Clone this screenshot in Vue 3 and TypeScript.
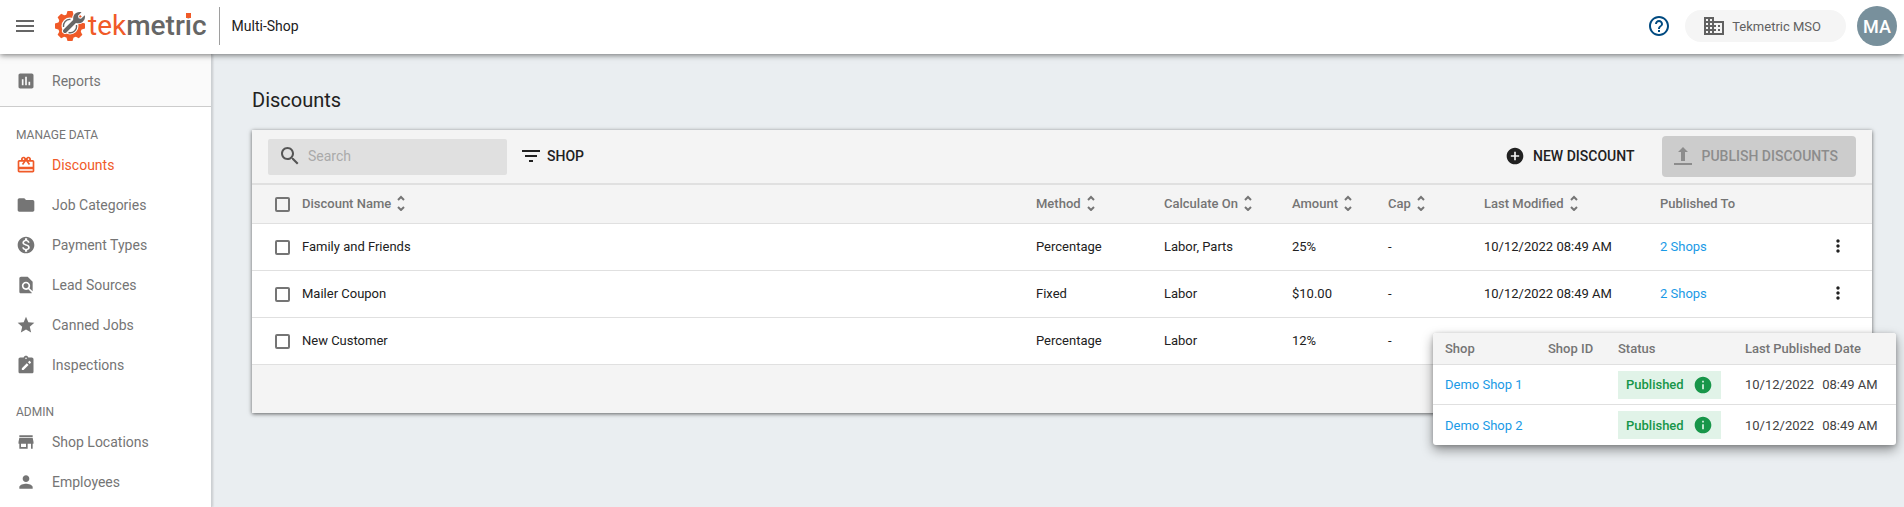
<script setup lang="ts">
import { ref } from 'vue'

interface NavItem { label: string; icon: string; active?: boolean }
interface Discount { name: string; method: string; on: string; amount: string; modified: string }

const icons: Record<string, string> = {
  reports: 'M19 3H5c-1.1 0-2 .9-2 2v14c0 1.100.9 2 2 2h14c1.100 0 2-.9 2-2V5c0-1.100-.9-2-2-2zM9 17H7v-7h2v7zm4 0h-2V7h2v10zm4 0h-2v-4h2v4z',
  gift: 'M20 6h-2.180c.11-.31.18-.65.18-1 0-1.660-1.340-3-3-3-1.050 0-1.960.54-2.500 1.350l-.5.67-.5-.68C10.960 2.540 10.050 2 9 2 7.340 2 6 3.340 6 5c0 .35.07.69.18 1H4c-1.110 0-1.990.89-1.990 2L2 19c0 1.110.89 2 2 2h16c1.110 0 2-.89 2-2V8c0-1.110-.89-2-2-2zm-5-2c.55 0 1 .45 1 1s-.45 1-1 1-1-.45-1-1 .45-1 1-1zM9 4c.55 0 1 .45 1 1s-.45 1-1 1-1-.45-1-1 .45-1 1-1zm11 15H4v-2h16v2zm0-5H4V8h5.080L7 10.830 8.620 12 11 8.760l1-1.360 1 1.360L15.380 12 17 10.830 14.920 8H20v6z',
  folder: 'M10 4H4c-1.100 0-1.990.9-1.990 2L2 18c0 1.100.9 2 2 2h16c1.100 0 2-.9 2-2V8c0-1.100-.9-2-2-2h-8l-2-2z',
  money: 'M12 2C6.480 2 2 6.480 2 12s4.480 10 10 10 10-4.480 10-10S17.520 2 12 2zm1.410 16.090V20h-2.670v-1.930c-1.710-.36-3.160-1.460-3.270-3.400h1.960c.1 1.050.82 1.870 2.650 1.870 1.960 0 2.400-.98 2.400-1.590 0-.83-.44-1.610-2.670-2.140-2.480-.6-4.180-1.620-4.180-3.670 0-1.720 1.390-2.840 3.110-3.210V4h2.670v1.950c1.860.45 2.790 1.860 2.850 3.390H14.300c-.05-1.110-.64-1.870-2.220-1.870-1.500 0-2.400.68-2.400 1.640 0 .84.65 1.390 2.670 1.910s4.180 1.390 4.180 3.910c-.01 1.830-1.380 2.830-3.120 3.160z',
  lead: 'M20 19.590V8l-6-6H6c-1.100 0-1.990.9-1.990 2L4 20c0 1.100.89 2 1.990 2H18c.45 0 .85-.15 1.190-.4l-4.430-4.430c-.8.52-1.740.83-2.760.83-2.760 0-5-2.240-5-5s2.240-5 5-5 5 2.240 5 5c0 1.020-.31 1.960-.83 2.750L20 19.590zM9 13c0 1.660 1.340 3 3 3s3-1.340 3-3-1.340-3-3-3-3 1.340-3 3z',
  star: 'M12 17.270L18.180 21l-1.640-7.030L22 9.240l-7.190-.61L12 2 9.190 8.630 2 9.240l5.460 4.730L5.820 21z',
  inspect: 'M19 3h-4.180C14.400 1.840 13.300 1 12 1s-2.400.84-2.820 2H5c-1.100 0-2 .9-2 2v15c0 1.100.9 2 2 2h14c1.100 0 2-.9 2-2V5c0-1.100-.9-2-2-2zm-7 0c.55 0 1 .45 1 1s-.45 1-1 1-1-.45-1-1 .45-1 1-1zM9.100 18H7v-2.100l5.980-5.980 2.100 2.100L9.100 18zm8.750-8.750l-1.400 1.400-2.100-2.100 1.400-1.400c.2-.2.510-.2.710 0l1.390 1.390c.2.2.2.510 0 .71z',
  store: 'M20 4H4v2h16V4zm1 10v-2l-1-5H4l-1 5v2h1v6h10v-6h4v6h2v-6h1zm-9 4H6v-4h6v4z',
  person: 'M12 12c2.210 0 4-1.790 4-4s-1.790-4-4-4-4 1.790-4 4 1.790 4 4 4zm0 2c-2.670 0-8 1.340-8 4v2h16v-2c0-2.660-5.330-4-8-4z',
}
const groups: { title: string; items: NavItem[] }[] = [
  { title: 'MANAGE DATA', items: [
    { label: 'Discounts', icon: 'gift', active: true },
    { label: 'Job Categories', icon: 'folder' },
    { label: 'Payment Types', icon: 'money' },
    { label: 'Lead Sources', icon: 'lead' },
    { label: 'Canned Jobs', icon: 'star' },
    { label: 'Inspections', icon: 'inspect' },
  ] },
  { title: 'ADMIN', items: [
    { label: 'Shop Locations', icon: 'store' },
    { label: 'Employees', icon: 'person' },
  ] },
]
const columns = [
  { key: 'name', label: 'Discount Name', sort: true },
  { key: 'method', label: 'Method', sort: true },
  { key: 'on', label: 'Calculate On', sort: true },
  { key: 'amount', label: 'Amount', sort: true },
  { key: 'cap', label: 'Cap', sort: true },
  { key: 'modified', label: 'Last Modified', sort: true },
  { key: 'published', label: 'Published To', sort: false },
]
const discounts: Discount[] = [
  { name: 'Family and Friends', method: 'Percentage', on: 'Labor, Parts', amount: '25%', modified: '10/12/2022 08:49 AM' },
  { name: 'Mailer Coupon', method: 'Fixed', on: 'Labor', amount: '$10.00', modified: '10/12/2022 08:49 AM' },
  { name: 'New Customer', method: 'Percentage', on: 'Labor', amount: '12%', modified: '10/12/2022 08:49 AM' },
]
const shops = ['Demo Shop 1', 'Demo Shop 2']
const search = ref('')
const teeth = [0, 45, 90, 135, 180, 225, 270, 315]
</script>

<template>
  <div class="app">
    <header class="topbar">
      <button class="plain menu" aria-label="Menu">
        <svg width="24" height="24" viewBox="0 0 24 24"><path d="M3 18h18v-2H3v2zm0-5h18v-2H3v2zm0-7v2h18V6H3z" /></svg>
      </button>
      <a class="brand" href="#" aria-label="tekmetric">
        <svg width="32" height="32" viewBox="0 0 32 32">
          <g class="gear">
            <circle cx="15" cy="16" r="12" />
            <path v-for="a in teeth" :key="a" d="M11 6 L12.500 1 h5 L19 6z" :transform="`rotate(${a} 15 16)`" />
          </g>
          <circle cx="15" cy="16" r="8.500" fill="#fff" />
          <path d="M8.500 17a6.500 6.500 0 0 1 7-7.500M21.500 15a6.500 6.500 0 0 1-8 7.500" fill="none" stroke="#666" stroke-width="1.300" />
          <path class="head-edge" d="M18.500 11 C17 5 21 1 26.500 2.200 L23 5.800 L23.600 8.200 L26 8.800 L29.800 5.200 C31 10 26.500 14.500 21 13z" />
          <path class="wrench-edge" d="M10 21 L20 11" />
          <path class="wrench" d="M10 21 L21 10" />
          <path class="head" d="M18.500 11 C17 5 21 1 26.500 2.200 L23 5.800 L23.600 8.200 L26 8.800 L29.800 5.200 C31 10 26.500 14.500 21 13z" />
        </svg>
        <span class="wordmark"><span class="tek">tek</span><span class="metric">metr<span class="dotted">i</span>c</span></span>
      </a>
      <span class="area">Multi-Shop</span>
      <button class="plain help" aria-label="Help">
        <svg width="24" height="24" viewBox="0 0 24 24"><path d="M11 18h2v-2h-2v2zm1-16C6.480 2 2 6.480 2 12s4.480 10 10 10 10-4.480 10-10S17.520 2 12 2zm0 18c-4.410 0-8-3.590-8-8s3.590-8 8-8 8 3.590 8 8-3.590 8-8 8zm0-14c-2.210 0-4 1.790-4 4h2c0-1.100.9-2 2-2s2 .9 2 2c0 2-3 1.750-3 5h2c0-2.250 3-2.500 3-5 0-2.210-1.790-4-4-4z" /></svg>
      </button>
      <button class="plain org">
        <svg width="24" height="24" viewBox="0 0 24 24"><path d="M12 7V3H2v18h20V7H12zM6 19H4v-2h2v2zm0-4H4v-2h2v2zm0-4H4V9h2v2zm0-4H4V5h2v2zm4 12H8v-2h2v2zm0-4H8v-2h2v2zm0-4H8V9h2v2zm0-4H8V5h2v2zm10 12h-8v-2h2v-2h-2v-2h2v-2h-2V9h8v10zm-2-8h-2v2h2v-2zm0 4h-2v2h2v-2z" /></svg>
        Tekmetric MSO
      </button>
      <button class="plain avatar">MA</button>
    </header>

    <div class="body">
      <nav class="sidebar">
        <a class="nav reports" href="#"><svg width="20" height="20" viewBox="0 0 24 24"><path :d="icons.reports" /></svg>Reports</a>
        <section v-for="g in groups" :key="g.title" class="group">
          <h2>{{ g.title }}</h2>
          <a v-for="i in g.items" :key="i.label" class="nav" :class="{ active: i.active }" href="#">
            <svg width="20" height="20" viewBox="0 0 24 24"><path fill-rule="evenodd" :d="icons[i.icon]" /></svg>{{ i.label }}
          </a>
        </section>
      </nav>

      <main>
        <h1>Discounts</h1>
        <div class="card">
          <div class="toolbar">
            <label class="search">
              <svg width="24" height="24" viewBox="0 0 24 24"><path d="M15.500 14h-.79l-.28-.27C15.410 12.590 16 11.110 16 9.500 16 5.910 13.090 3 9.500 3S3 5.910 3 9.500 5.910 16 9.500 16c1.610 0 3.090-.59 4.230-1.570l.27.28v.79l5 4.990L20.490 19l-4.990-5zm-6 0C7.010 14 5 11.990 5 9.500S7.010 5 9.500 5 14 7.010 14 9.500 11.990 14 9.500 14z" /></svg>
              <input v-model="search" type="text" placeholder="Search" aria-label="Search" />
            </label>
            <button class="plain action">
              <svg width="24" height="24" viewBox="0 0 24 24"><path d="M10 18h4v-2h-4v2zM3 6v2h18V6H3zm3 7h12v-2H6v2z" /></svg>SHOP
            </button>
            <button class="plain action new">
              <svg width="20" height="20" viewBox="0 0 24 24"><path d="M12 2C6.480 2 2 6.480 2 12s4.480 10 10 10 10-4.480 10-10S17.520 2 12 2zm5 11h-4v4h-2v-4H7v-2h4V7h2v4h4v2z" /></svg>NEW DISCOUNT
            </button>
            <button class="plain publish" disabled>
              <svg width="20" height="20" viewBox="0 0 20 20"><path d="M10 1 L15 6 H12 V15 H8 V6 H5z M1 17h18v2H1z" /></svg>PUBLISH DISCOUNTS
            </button>
          </div>

          <table class="grid">
            <colgroup><col class="c-check" /><col v-for="c in columns" :key="c.key" :class="'c-' + c.key" /><col class="c-more" /></colgroup>
            <thead>
              <tr>
                <th class="control"><input type="checkbox" aria-label="Select all discounts" /></th>
                <th v-for="c in columns" :key="c.key">
                  <button v-if="c.sort" class="plain sort">{{ c.label }}<svg width="10" height="16" viewBox="0 0 10 16"><path d="M2 5 L5 2 L8 5 M2 12 L5 15 L8 12" /></svg></button>
                  <template v-else>{{ c.label }}</template>
                </th>
                <th></th>
              </tr>
            </thead>
            <tbody>
              <tr v-for="d in discounts" :key="d.name">
                <td class="control"><input type="checkbox" :aria-label="`Select ${d.name}`" /></td>
                <td>{{ d.name }}</td>
                <td>{{ d.method }}</td>
                <td>{{ d.on }}</td>
                <td>{{ d.amount }}</td>
                <td>-</td>
                <td>{{ d.modified }}</td>
                <td><a href="#">2 Shops</a></td>
                <td class="control">
                  <button class="plain" :aria-label="`Actions for ${d.name}`"><svg width="20" height="20" viewBox="0 0 24 24"><path d="M12 8c1.100 0 2-.9 2-2s-.9-2-2-2-2 .9-2 2 .9 2 2 2zm0 2c-1.100 0-2 .9-2 2s.9 2 2 2 2-.9 2-2-.9-2-2-2zm0 6c-1.100 0-2 .9-2 2s.9 2 2 2 2-.9 2-2-.9-2-2-2z" /></svg></button>
                </td>
              </tr>
            </tbody>
          </table>
          <div class="footer"></div>

          <div class="popover">
            <table>
              <thead><tr><th>Shop</th><th>Shop ID</th><th>Status</th><th>Last Published Date</th></tr></thead>
              <tbody>
                <tr v-for="s in shops" :key="s">
                  <td><a href="#">{{ s }}</a></td>
                  <td></td>
                  <td>
                    <span class="badge">Published
                      <svg width="20" height="20" viewBox="0 0 24 24"><path d="M12 2C6.480 2 2 6.480 2 12s4.480 10 10 10 10-4.480 10-10S17.520 2 12 2zm1 15h-2v-6h2v6zm0-8h-2V7h2v2z" /></svg>
                    </span>
                  </td>
                  <td><span class="when"><span>10/12/2022</span><span>08:49 AM</span></span></td>
                </tr>
              </tbody>
            </table>
          </div>
        </div>
      </main>
    </div>
  </div>
</template>

<style>
body { margin: 0; background: #eaeef1; }
</style>

<style scoped>
.app { min-height: 100vh; display: flex; flex-direction: column; font-family: Roboto, "Liberation Sans", sans-serif; font-size: 13px; color: #212121; }
* { box-sizing: border-box; }
svg { flex: none; fill: currentColor; display: block; }
a { color: #1a9ae6; text-decoration: none; }
.plain { border: 0; background: none; padding: 0; margin: 0; font: inherit; color: inherit; }

.topbar { position: relative; z-index: 2; display: flex; align-items: center; height: 54px; padding: 0 7px 2px 13px; background: #fff; box-shadow: 0 1px 6px rgba(0, 0, 0, .55); }
.menu { color: #666; }
.brand { display: flex; align-items: center; gap: 1px; margin-left: 18px; padding-right: 12px; height: 38px; border-right: 1px solid #9e9e9e; }
.wordmark { font-size: 28px; line-height: 32px; }
.gear { fill: #f05a28; }
.tek { color: #f05a28; }
.metric { color: #666; font-weight: 500; }
.dotted { position: relative; }
.dotted::after { content: ""; position: absolute; left: 1px; top: 4px; width: 5px; height: 5px; background: #f05a28; }
.wrench-edge { stroke: #fff; stroke-width: 6; stroke-linecap: round; }
.wrench { stroke: #666; stroke-width: 4; stroke-linecap: round; }
.head { fill: #666; }
.head-edge { fill: #fff; stroke: #fff; stroke-width: 2; }
.area { margin-left: 12px; font-size: 14px; }
.help { margin-left: auto; color: #004a80; }
.org { display: flex; align-items: center; gap: 6px; height: 32px; margin: 0 11px 0 14px; padding: 0 25px 0 17px; border-radius: 16px; background: #f5f5f5; color: #616161; }
.avatar { width: 40px; height: 40px; border-radius: 50%; background: #78909c; color: #fff; font-size: 18px; font-weight: 500; }

.body { flex: 1; display: flex; }
.sidebar { width: 212px; background: #fff; border-right: 1px solid #ccd0d3; box-shadow: 1px 0 2px rgba(0, 0, 0, .15); }
.nav { display: flex; align-items: center; gap: 16px; height: 40px; padding-left: 16px; font-size: 14px; color: #757575; }
.reports { height: 53px; margin-bottom: 1px; padding-top: 2px; background: #fafafa; border-bottom: 1px solid #ccc; }
.nav.active { color: #f05a28; }
.group { padding-top: 17px; }
.group h2 { margin: 0; padding-left: 16px; font-size: 12px; line-height: 20px; font-weight: 400; color: #757575; }

main { flex: 1; padding: 32px 32px 0 40px; }
h1 { margin: 0 0 16px; font-size: 20px; line-height: 28px; font-weight: 400; }
.card { position: relative; background: #f4f4f4; box-shadow: 0 1px 4px rgba(0, 0, 0, .6); }
.toolbar { display: flex; align-items: center; height: 55px; padding: 0 16px; border-bottom: 2px solid #e0e0e0; font-size: 14px; font-weight: 500; }
.search { display: flex; align-items: center; gap: 6px; width: 239px; height: 36px; margin-right: 12px; padding: 0 10px 2px; border-radius: 2px; background: #e0e0e0; color: #555; }
.search input { flex: 1; min-width: 0; border: 0; padding: 0; outline: 0; background: none; font: 14px Roboto, sans-serif; color: #212121; }
.search input::placeholder { color: #aaa; }
.action { display: flex; align-items: center; gap: 4px; padding-bottom: 2px; }
.new { margin-left: auto; gap: 8px; }
.publish { display: flex; align-items: center; gap: 8px; height: 41px; margin-left: 28px; padding: 0 18px 2px 11px; border-radius: 4px; background: #ccc; color: #8c8c8c; }

table { border-collapse: separate; border-spacing: 0; }
.grid { width: 100%; table-layout: fixed; background: #fff; }
.grid th, .grid td { padding: 0 0 2px; text-align: left; border-bottom: 1px solid #e0e0e0; }
.grid th { height: 39px; background: #f4f4f4; }
.grid td { height: 47px; }
.grid .control { padding: 0; }
th { font-weight: 500; color: #757575; }
.c-check { width: 50px; }
.c-method, .c-on { width: 128px; }
.c-amount, .c-cap { width: 96px; }
.c-modified { width: 176px; }
.c-published { width: 168px; }
.c-more { width: 44px; }
input[type="checkbox"] { appearance: none; display: block; width: 15px; height: 15px; margin: 0 0 0 23px; border: 2px solid #757575; border-radius: 2px; background: transparent; }
.sort { display: flex; align-items: center; gap: 5px; }
.sort path { fill: none; stroke: #757575; stroke-width: 2; }
.footer { height: 48px; }

.popover { position: absolute; top: 203px; right: -24px; width: 463px; overflow: hidden; border-radius: 3px; background: #fff; box-shadow: 0 5px 12px rgba(0, 0, 0, .4), 0 1px 4px rgba(0, 0, 0, .2); }
.popover table { width: 100%; table-layout: fixed; }
.popover th, .popover td { padding: 0 0 0 12px; text-align: left; }
.popover th { height: 32px; background: #f4f4f4; border-bottom: 1px solid #e0e0e0; }
.popover td { height: 40px; }
.popover tr:not(:last-child) td { border-bottom: 1px solid #e0e0e0; }
.popover th:nth-child(1) { width: 103px; }
.popover th:nth-child(2) { width: 70px; }
.popover th:nth-child(3) { width: 127px; }
.badge { display: flex; align-items: center; justify-content: space-between; width: 103px; height: 28px; padding: 0 8px; background: #e1f3e8; color: #179649; font-weight: 500; }
.when { display: flex; gap: 8px; color: #424242; }
</style>
